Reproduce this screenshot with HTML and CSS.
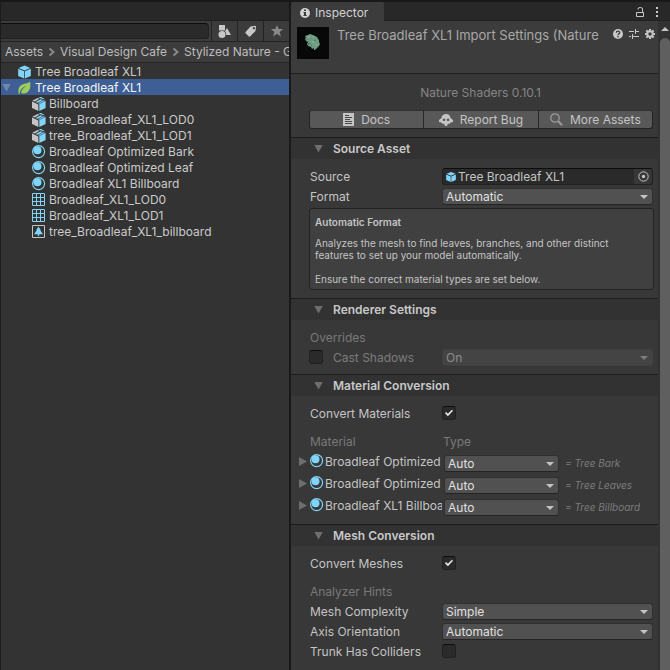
FILE: index.html
```html
<!DOCTYPE html>
<html lang="en">
<head>
<meta charset="utf-8">
<title>Inspector</title>
<link rel="stylesheet" href="styles.css">
</head>
<body>
<svg class="sprite" aria-hidden="true">
  <symbol id="cube" viewBox="0 0 14 14">
    <path fill="#81d4fa" d="M7 0 13.300 2.600 7 5.300.7 2.600zM.2 3.500 6.600 6.200V14L.2 11.200zM13.800 3.500 7.400 6.200V14l6.400-2.800z"/>
  </symbol>
  <symbol id="model" viewBox="0 0 14 14">
    <path fill="#c4c4c4" d="M0 4.600 6.400 7.400V14L0 11z"/>
    <path fill="#81d4fa" d="M13.600 3.800 7.300 7V14l6.300-3z"/>
    <path fill="#c4c4c4" d="M.3 3.700 5.500 1 7.700 1.800 2.500 4.600z"/>
    <path fill="#81d4fa" d="M3.400 5 8.700 2.200l2 .7L5.300 5.800zM6 6.100l5.300-2.900 1.700.3L7 6.700zM6.500.5 8.800-.2l4 2.200-1.500.3z"/>
  </symbol>
  <symbol id="material" viewBox="0 0 14 14">
    <circle cx="6.600" cy="6.600" r="6" fill="none" stroke="#81d4fa" stroke-width="1.200"/>
    <circle cx="5.500" cy="5.200" r="4" fill="#81d4fa"/>
  </symbol>
  <symbol id="mesh" viewBox="0 0 14 14">
    <path fill="none" stroke="#81d4fa" d="M.5.5h12v12H.5zM4.500.5v12M8.500.5v12M.5 4.500h12M.5 8.500h12"/>
  </symbol>
  <symbol id="billboard" viewBox="0 0 14 14">
    <path fill="none" stroke="#c4c4c4" d="M.5.5h12v12H.5z"/>
    <path fill="#81d4fa" d="M6.500 1.500 8.700 5H8.200L11 9.300H7.200V11H5.800V9.300H2L4.800 5H4.300z"/>
  </symbol>
  <symbol id="leaf" viewBox="0 0 14 14">
    <path fill="#9ccc5a" d="M13 0c.8 5 .2 9.800-3.500 12-2 1.200-4.500 1-6.200.3C3.600 9.500 5.500 6.600 8.800 4.800 5 6 2.400 8.800 1.700 12.800l-.9 1C-.2 9 .6 5.500 3.600 3.700 6.500 2 10.500 2.600 13 0z"/>
  </symbol>
</svg>

<div class="editor">
  <section class="project">
    <div class="tabs"></div>
    <div class="toolbar">
      <input class="search" type="text" aria-label="Search">
      <button class="tool" aria-label="Search by type"><svg width="13" height="13" viewBox="0 0 13 13" fill="#c8c8c8"><path d="M1 0h6v5.500H1z"/><circle cx="4" cy="9.500" r="3.500"/><path d="M9 3l4 7H8.300A5 5 0 0 0 7 6.300z"/></svg></button>
      <button class="tool" aria-label="Search by label"><svg width="12" height="12" viewBox="0 0 12 12"><path fill="#c8c8c8" fill-rule="evenodd" d="M5.500 1.500 10 .8q1 0 1 1L10.500 6 5 11.500q-.6.5-1.200 0L.6 8.300Q0 7.700.6 7zM8.800 2a1.100 1.100 0 1 0 .1 0z"/></svg></button>
      <button class="tool" aria-label="Save search"><svg width="12" height="12" viewBox="0 0 12 12"><path fill="#8a8a8a" d="m6 0 1.700 4H12L8.600 6.900 9.900 11.500 6 8.800 2.100 11.500 3.400 6.900 0 4h4.300z"/></svg></button>
    </div>
    <nav class="crumbs">
      <a href="#">Assets</a>
      <svg width="7" height="8" viewBox="0 0 7 8"><path d="m1.500.5 4 3.500-4 3.500"/></svg>
      <a href="#">Visual Design Cafe</a>
      <svg width="7" height="8" viewBox="0 0 7 8"><path d="m1.500.5 4 3.500-4 3.500"/></svg>
      <a href="#">Stylized Nature - G</a>
    </nav>
    <ul class="tree">
      <li><svg><use href="#cube"/></svg>Tree Broadleaf XL1</li>
      <li class="selected"><i class="fold"></i><svg><use href="#leaf"/></svg>Tree Broadleaf XL1</li>
      <li class="child"><svg><use href="#model"/></svg>Billboard</li>
      <li class="child"><svg><use href="#model"/></svg>tree_Broadleaf_XL1_LOD0</li>
      <li class="child"><svg><use href="#model"/></svg>tree_Broadleaf_XL1_LOD1</li>
      <li class="child"><svg><use href="#material"/></svg>Broadleaf Optimized Bark</li>
      <li class="child"><svg><use href="#material"/></svg>Broadleaf Optimized Leaf</li>
      <li class="child"><svg><use href="#material"/></svg>Broadleaf XL1 Billboard</li>
      <li class="child"><svg><use href="#mesh"/></svg>Broadleaf_XL1_LOD0</li>
      <li class="child"><svg><use href="#mesh"/></svg>Broadleaf_XL1_LOD1</li>
      <li class="child"><svg><use href="#billboard"/></svg>tree_Broadleaf_XL1_billboard</li>
    </ul>
  </section>

  <section class="inspector">
    <div class="tabs">
      <button class="tab"><svg width="10" height="10" viewBox="0 0 10 10"><circle cx="5" cy="5" r="5" fill="#d2d2d2"/><path fill="#3c3c3c" d="M4 1.500h2v1.500H4zM3.500 4H6v3h.7v1H3.400V7H4V5h-.5z"/></svg>Inspector</button>
      <span class="tab-actions">
        <button aria-label="Lock"><svg width="8" height="10" viewBox="0 0 8 10" fill="none" stroke="#c8c8c8"><path d="M.5 5.500h7v4h-7zM2 2.500V2Q2 .5 4 .5h.500Q6.500.5 6.500 2v3.500"/></svg></button>
        <button aria-label="Menu"><svg width="2" height="10" viewBox="0 0 2 10" fill="#c8c8c8"><path d="M0 0h2v2H0zM0 4h2v2H0zM0 8h2v2H0z"/></svg></button>
      </span>
    </div>
    <div class="view">
      <div class="content">
        <header class="asset">
          <svg width="32" height="32" viewBox="0 0 32 32"><path fill="#080808" d="M0 0h32v32H0z"/><path fill="#6e9c81" d="m8 9 3-1 2-1 3 1 2 1 2 1 1 2 1 1v2l1 2-1 2-1 1-2 2-1 1h-1v-2l-2 1-1-2-3-1-1-2 1-2-2-1-1-2 1-1z"/><path fill="#4c7660" d="M11 16h2v1h-1v1h-1zM14 18l1-1v2h-1zM14 11l1 1h-2zM18 12l1 2h-2zM10 12h1v1h-1z"/><path fill="#83ae92" d="M11 9h2v2h-2zM15 14h2v2h-2zM18 17h2v1h-2zM16 9h1v2h-1z"/></svg>
          <h1>Tree Broadleaf XL1 Import Settings (Nature</h1>
          <span class="asset-actions">
            <button aria-label="Help"><svg width="10" height="10" viewBox="0 0 10 10"><circle cx="5" cy="5" r="5" fill="#c8c8c8"/><path fill="none" stroke="#3c3c3c" stroke-width="1.300" d="M3.300 3.700C3.300 1.500 6.800 1.600 6.700 3.600 6.600 4.800 5 4.700 5 6.200M5 7v1.400"/></svg></button>
            <button aria-label="Presets"><svg width="10" height="10" viewBox="0 0 10 10" fill="none" stroke="#c8c8c8"><path d="M0 2.500h5M7 2.500h3M6.500 0v5M0 7.500h2M4 7.500h6M3.500 5v5"/></svg></button>
            <button aria-label="Settings"><svg width="10" height="10" viewBox="0 0 10 10"><circle cx="5" cy="5" r="2.700" fill="none" stroke="#c8c8c8" stroke-width="1.900"/><path stroke="#c8c8c8" stroke-width="2" d="M5 0v1.800M5 8.200V10M0 5h1.800M8.200 5H10M1.400 1.400l1.300 1.300M7.300 7.300l1.300 1.300M1.400 8.600l1.300-1.300M7.300 2.700l1.300-1.300"/></svg></button>
          </span>
        </header>

        <p class="version">Nature Shaders 0.10.1</p>
        <div class="links">
          <button><svg width="11" height="13" viewBox="0 0 11 13"><path fill="#c4c4c4" d="M0 0h11v13H0z"/><path stroke="#484848" d="M2 2.500h4M2 4.500h7M2 6.500h5M2 8.500h7M2 10.500h7"/></svg>Docs</button>
          <button><svg width="14" height="12" viewBox="0 0 14 12"><path fill="#c4c4c4" fill-rule="evenodd" d="M2.500 4C2.700-1.300 11.300-1.300 11.500 4l2.500 2v2l-2.500.5-1 1.500-1.500-.5L8 12H6L5 9.500 3.500 10l-1-1.500L0 8V6zM5 4.500a1.300 1.300 0 1 0 .1 0zM9 4.500a1.300 1.300 0 1 0 .1 0z"/></svg>Report Bug</button>
          <button><svg width="13" height="13" viewBox="0 0 13 13" fill="none" stroke="#9a9a9a"><circle cx="5" cy="5" r="4.200" stroke-width="1.300"/><path stroke-width="2" d="m8.200 8.200 4 4"/></svg>More Assets</button>
        </div>

        <section class="group">
          <h2><i class="fold"></i>Source Asset</h2>
          <div class="row">
            <label for="source">Source</label>
            <div class="object"><svg width="10" height="10"><use href="#cube"/></svg><input id="source" type="text" value="Tree Broadleaf XL1"><button class="picker" aria-label="Select object"><svg width="11" height="11" viewBox="0 0 11 11"><circle cx="5.500" cy="5.500" r="4.700" fill="none" stroke="#c4c4c4"/><circle cx="5.500" cy="5.500" r="1.700" fill="#c4c4c4"/></svg></button></div>
          </div>
          <div class="row">
            <label for="format">Format</label>
            <div class="drop"><select id="format"><option>Automatic</option></select></div>
          </div>
          <div class="help">
            <strong>Automatic Format</strong>
            <p>Analyzes the mesh to find leaves, branches, and other distinct<br>features to set up your model automatically.</p>
            <p>Ensure the correct material types are set below.</p>
          </div>
        </section>

        <section class="group">
          <h2><i class="fold"></i>Renderer Settings</h2>
          <h3>Overrides</h3>
          <div class="row override">
            <input type="checkbox" id="override" aria-label="Override cast shadows">
            <label for="shadows">Cast Shadows</label>
            <div class="drop"><select id="shadows" disabled><option>On</option></select></div>
          </div>
        </section>

        <section class="group">
          <h2><i class="fold"></i>Material Conversion</h2>
          <div class="row">
            <label for="mats">Convert Materials</label>
            <input type="checkbox" id="mats" checked>
          </div>
          <div class="row heading"><h3>Material</h3><h3>Type</h3></div>
          <div class="material">
            <i class="fold closed"></i>
            <label for="m1"><svg><use href="#material"/></svg>Broadleaf Optimized</label>
            <div class="drop"><select id="m1"><option>Auto</option></select></div>
            <em>= Tree Bark</em>
          </div>
          <div class="material">
            <i class="fold closed"></i>
            <label for="m2"><svg><use href="#material"/></svg>Broadleaf Optimized</label>
            <div class="drop"><select id="m2"><option>Auto</option></select></div>
            <em>= Tree Leaves</em>
          </div>
          <div class="material">
            <i class="fold closed"></i>
            <label for="m3"><svg><use href="#material"/></svg>Broadleaf XL1 Billboard</label>
            <div class="drop"><select id="m3"><option>Auto</option></select></div>
            <em>= Tree Billboard</em>
          </div>
        </section>

        <section class="group">
          <h2><i class="fold"></i>Mesh Conversion</h2>
          <div class="row">
            <label for="meshes">Convert Meshes</label>
            <input type="checkbox" id="meshes" checked>
          </div>
          <h3 class="spaced">Analyzer Hints</h3>
          <div class="row">
            <label for="complexity">Mesh Complexity</label>
            <div class="drop"><select id="complexity"><option>Simple</option></select></div>
          </div>
          <div class="row">
            <label for="axis">Axis Orientation</label>
            <div class="drop"><select id="axis"><option>Automatic</option></select></div>
          </div>
          <div class="row">
            <label for="trunk">Trunk Has Colliders</label>
            <input type="checkbox" id="trunk">
          </div>
        </section>
      </div>
      <div class="scroll"><i class="up"></i><div class="thumb-bar"></div></div>
    </div>
  </section>
</div>
</body>
</html>
```

FILE: styles.css
```css
* { box-sizing: border-box; }

body {
  margin: 0;
  background: #383838;
  color: #c4c4c4;
  font: 12px/16px Inter, "Liberation Sans", sans-serif;
}

button, input, select { font: inherit; color: inherit; margin: 0; }
button { padding: 0; border: 0; background: none; }
h1, h2, h3, p, ul { margin: 0; padding: 0; font-weight: 400; font-size: 12px; }
svg { flex: none; display: block; }

.sprite { display: none; }

.editor {
  display: grid;
  grid-template-columns: minmax(0, 29fr) minmax(0, 38fr);
  min-height: 100vh;
  border-top: 2px solid #191919;
}

.project {
  background: #333;
  border-left: 1px solid #1c1c1c;
  border-right: 1px solid #191919;
}
.inspector {
  display: flex;
  flex-direction: column;
  border-left: 1px solid #191919;
}

.tabs {
  display: flex;
  justify-content: space-between;
  height: 19px;
  background: #282828;
  box-shadow: inset 0 -1px #202020;
}
.tab {
  display: flex;
  align-items: center;
  gap: 5px;
  padding: 2px 16px 0 9px;
  background: #3c3c3c;
  border-radius: 2px 2px 0 0;
  color: #d2d2d2;
}
.tab-actions { display: flex; align-items: center; gap: 12px; padding-right: 12px; }

/* Project browser */
.toolbar {
  display: flex;
  align-items: center;
  height: 21px;
  background: #3c3c3c;
  border-bottom: 1px solid #232323;
}
.search {
  flex: 1;
  min-width: 0;
  height: 16px;
  margin-right: 2px;
  background: #2a2a2a;
  border: 1px solid #212121;
  border-top-color: #0d0d0d;
  border-left: 0;
  border-radius: 0 4px 4px 0;
}
.tool {
  display: flex;
  align-items: center;
  justify-content: center;
  width: 26px;
  height: 20px;
  border-left: 1px solid #232323;
}
.crumbs {
  display: flex;
  align-items: center;
  gap: 5px;
  height: 21px;
  padding-left: 4px;
  overflow: hidden;
  white-space: nowrap;
  background: #3c3c3c;
  border-bottom: 1px solid #252525;
}
.crumbs a { color: #bdbdbd; text-decoration: none; }
.crumbs svg { fill: none; stroke: #8a8a8a; stroke-width: 2; }

.tree { list-style: none; color: #cacaca; }
.tree li {
  display: flex;
  align-items: center;
  height: 16px;
  padding: 1px 0 0 17px;
  gap: 4px;
  white-space: nowrap;
}
.tree svg { width: 13px; height: 14px; }
.tree .child { padding-left: 31px; gap: 3px; }
.tree .child svg { width: 14px; }
.tree .selected { background: #3e5f96; color: #f4f4f4; padding-left: 1px; }
.tree .fold { margin-right: 3px; background: #6f86ad; }

.fold {
  flex: none;
  width: 9px;
  height: 8px;
  background: #6e6e6e;
  clip-path: polygon(0 0, 100% 0, 50% 100%);
}
.fold.closed {
  width: 8px;
  height: 9px;
  margin: 4px 0 0 1px;
  clip-path: polygon(0 0, 100% 50%, 0 100%);
}

/* Inspector */
.view { flex: 1; display: flex; }
.content { flex: 1; min-width: 0; }
.asset {
  display: flex;
  align-items: flex-start;
  gap: 8px;
  height: 53px;
  padding: 6px 3px 0 6px;
  background: #3c3c3c;
  border-bottom: 1px solid #1f1f1f;
}
.asset h1 {
  flex: 1;
  min-width: 0;
  overflow: hidden;
  white-space: nowrap;
  font-size: 13px;
  color: #a8a8a8;
}
.asset-actions { display: flex; gap: 6px; padding-top: 2px; }

.version { padding: 11px 0 9px 12px; text-align: center; color: #858585; }
.links {
  display: flex;
  height: 19px;
  margin: 0 5px 8px 18px;
  background: #585858;
  border: 1px solid #242424;
  border-top-color: #303030;
  border-radius: 3px;
}
.links button {
  flex: 1;
  display: flex;
  align-items: center;
  justify-content: center;
  gap: 7px;
}
.links button + button { border-left: 1px solid #282828; }

.group { padding-bottom: 5px; }
.group h2 {
  display: flex;
  align-items: center;
  gap: 10px;
  height: 22px;
  margin-bottom: 9px;
  padding-left: 23px;
  background: #323232;
  border-top: 1px solid #1c1c1c;
  font-weight: 600;
  color: #c8c8c8;
}
.group h3 { height: 20px; line-height: 18px; padding-left: 19px; color: #787878; }
.group .spaced { margin-top: 8px; }

.row {
  display: grid;
  grid-template-columns: 132px minmax(0, 1fr);
  height: 20px;
  padding: 0 5px 0 19px;
  line-height: 18px;
}
.row.override { grid-template-columns: 23px 109px minmax(0, 1fr); color: #7c7c7c; }
.row.heading { margin-top: 8px; }
.row h3 { padding-left: 0; }
.row h3 + h3 { padding-left: 1px; }

.drop { position: relative; height: 17px; }
.drop select {
  display: block;
  width: 100%;
  height: 17px;
  padding: 0 18px 0 3px;
  appearance: none;
  background: #515151;
  border: 1px solid #303030;
  border-bottom-color: #242424;
  border-radius: 3px;
  color: #e0e0e0;
  line-height: 15px;
}
.drop::after {
  content: "";
  position: absolute;
  right: 5px;
  top: 7px;
  width: 8px;
  height: 4px;
  background: #c4c4c4;
  clip-path: polygon(0 0, 100% 0, 50% 100%);
  pointer-events: none;
}
.drop select:disabled { background: #444; border-color: #404040; color: #8c8c8c; opacity: 1; }
.drop:has(:disabled)::after { background: #7c7c7c; }

input[type="checkbox"] {
  appearance: none;
  display: grid;
  place-items: center;
  width: 14px;
  height: 14px;
  margin-top: 1px;
  background: #2a2a2a;
  border: 1px solid #212121;
  border-top-color: #0d0d0d;
  border-radius: 3px;
}
input[type="checkbox"]:checked::before {
  content: "";
  width: 8px;
  height: 8px;
  background: #e8e8e8;
  clip-path: polygon(0 52%, 14% 38%, 36% 60%, 86% 8%, 100% 22%, 36% 90%);
}
.override input[type="checkbox"] { margin-left: -1px; }

.object {
  display: flex;
  align-items: center;
  height: 17px;
  padding-left: 3px;
  background: #2a2a2a;
  border: 1px solid #202020;
  border-top-color: #0d0d0d;
  border-radius: 3px;
}
.object input {
  flex: 1;
  min-width: 0;
  height: 15px;
  padding: 0 0 0 2px;
  border: 0;
  background: none;
}
.picker {
  display: flex;
  align-items: center;
  justify-content: center;
  width: 18px;
  height: 15px;
  background: #373737;
  border-radius: 0 3px 3px 0;
}

.help {
  margin: 0 4px 3px 18px;
  padding: 7px 5px 4px;
  background: #404040;
  border: 1px solid #232323;
  border-radius: 3px;
  font-size: 10px;
  line-height: 12px;
}
.help strong { display: block; font-weight: 600; }
.help p { margin-top: 9px; font-size: 10px; }
.help p + p { margin-top: 12px; }

.material {
  display: grid;
  grid-template-columns: 12px 134px 115px minmax(0, 1fr);
  height: 22px;
  padding-left: 7px;
}
.material label {
  display: flex;
  gap: 1px;
  margin-right: 2px;
  overflow: hidden;
  white-space: nowrap;
  line-height: 18px;
}
.material label svg { width: 14px; height: 14px; margin-top: 1px; }
.material .drop { margin-top: 2px; }
.material em { padding: 1px 0 0 6px; font-size: 10px; line-height: 18px; color: #7c7c7c; white-space: nowrap; }

.scroll {
  width: 12px;
  padding: 6px 0 0 2px;
  display: flex;
  flex-direction: column;
  align-items: stretch;
  gap: 7px;
  background: #323232;
}
.up {
  align-self: center;
  width: 8px;
  height: 4px;
  background: #c4c4c4;
  clip-path: polygon(50% 0, 100% 100%, 0 100%);
}
.thumb-bar { flex: 1; background: #5f5f5f; border-radius: 5px 5px 0 0; }
```
